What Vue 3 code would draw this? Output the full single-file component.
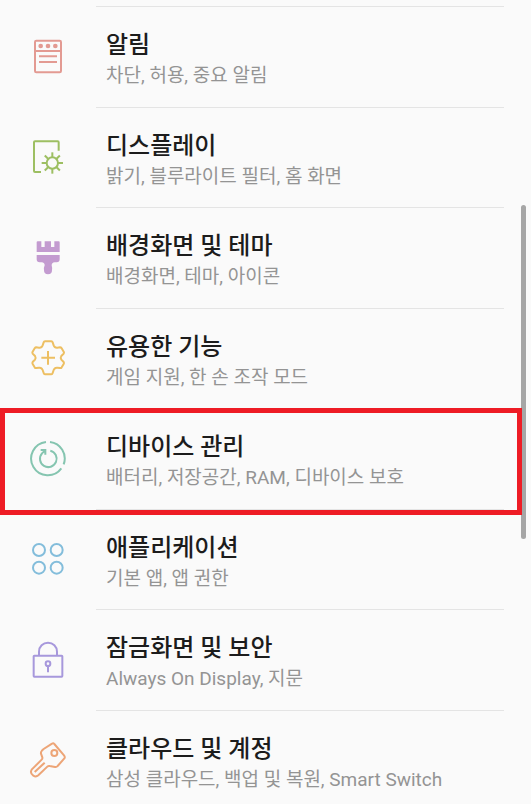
<script setup>
const items = [
  { id: 'notifications', title: '알림', detail: '차단, 허용, 중요 알림', color: '#e39a92', box: '24 21 120 120' },
  { id: 'display', title: '디스플레이', detail: '밝기, 블루라이트 필터, 홈 화면', color: '#9dbf62', box: '24 24 120 120' },
  { id: 'themes', title: '배경화면 및 테마', detail: '배경화면, 테마, 아이콘', color: '#c39bd0', box: '24 24 120 120' },
  { id: 'features', title: '유용한 기능', detail: '게임 지원, 한 손 조작 모드', color: '#edbf62', box: '24 21 120 120' },
  { id: 'device', title: '디바이스 관리', detail: '배터리, 저장공간, RAM, 디바이스 보호', color: '#85c5b0', box: '24 15 120 120', marked: true },
  { id: 'apps', title: '애플리케이션', detail: '기본 앱, 앱 권한', color: '#83bddb', box: '24 18 120 120' },
  { id: 'security', title: '잠금화면 및 보안', detail: 'Always On Display, 지문', color: '#a798dc', box: '24 15 120 120' },
  { id: 'accounts', title: '클라우드 및 계정', detail: '삼성 클라우드, 백업 및 복원, Smart Switch', color: '#eda577', box: '24 18 120 120' },
]
const rays = [0, 45, 90, 135, 180, 225, 270, 315]
</script>

<template>
  <main class="settings">
    <nav class="list">
      <a
        v-for="item in items"
        :key="item.id"
        class="row"
        :class="{ marked: item.marked }"
        :href="'#' + item.id"
      >
        <span class="icon-cell">
          <svg class="icon" :class="item.id" :viewBox="item.box" :style="{ color: item.color }" aria-hidden="true">
            <g v-if="item.id === 'notifications'">
              <rect x="45" y="32" width="78" height="95" rx="4" />
              <path d="M45 63H123M57 79H111M57 96H111" />
              <g class="solid">
                <circle cx="62" cy="48" r="7" />
                <circle cx="84" cy="48" r="7" />
                <circle cx="106" cy="48" r="7" />
              </g>
            </g>
            <g v-else-if="item.id === 'display'">
              <path d="M116 62V37Q116 34 113 34H45Q42 34 42 37V123Q42 126 45 126H63" />
              <circle cx="97" cy="99" r="17" />
              <path v-for="angle in rays" :key="angle" d="M97 82V67" :transform="`rotate(${angle} 97 99)`" />
            </g>
            <g v-else-if="item.id === 'themes'" class="solid">
              <path d="M53 34H64V51H74V34H93V51H103V34H116Q119 34 119 37V66H50V37Q50 34 53 34Z" />
              <path d="M50 75H119V88Q119 97 110 97H104Q95 98 95 106Q97 112 96 121A12 12 0 0 1 72 121Q71 112 74 106Q74 98 65 97H59Q50 97 50 88Z" />
            </g>
            <g v-else-if="item.id === 'features'">
              <path d="M75 28H94Q97 28 98 31L101 40Q104 48 112 47L120 46Q123 46 125 49L131 59Q133 62 131 65L124 72Q120 78 124 83L131 90Q133 93 131 96L125 106Q123 109 120 108L112 107Q104 106 101 114L98 123Q97 127 94 127H75Q72 127 71 123L68 114Q65 106 57 107L49 108Q46 109 44 106L38 96Q36 93 38 90L45 83Q49 78 45 72L38 65Q36 62 38 59L44 49Q46 46 49 46L57 47Q65 48 68 40L71 31Q72 28 75 28Z" />
              <path d="M84 57V98M64 77H105" />
            </g>
            <g v-else-if="item.id === 'device'">
              <path d="M90 24A50 50 0 0 1 131 91M124 103A50 50 0 1 1 78 24" />
              <path d="M91 50A25 25 0 1 1 66 58L76 49M62 48H76V62" />
            </g>
            <g v-else-if="item.id === 'apps'">
              <circle cx="57" cy="48" r="18" />
              <circle cx="110" cy="48" r="18" />
              <circle cx="57" cy="101" r="18" />
              <circle cx="110" cy="101" r="18" />
            </g>
            <g v-else-if="item.id === 'security'">
              <rect x="41" y="62" width="86" height="63" rx="2" />
              <path d="M57 62V50A27 27 0 0 1 111 50V62M84 93V112" />
              <circle cx="84" cy="86" r="7" />
            </g>
            <g v-else>
              <path d="M96 26Q100 23 103 27L132 61Q136 66 133 70L113 93Q110 97 105 96L89 93Q85 92 82 95L55 121Q48 127 40 122Q29 114 35 104L65 74Q68 71 67 67L63 56Q62 52 65 48Q67 45 71 42Z" />
              <circle cx="103" cy="54" r="9" />
              <path d="M44 111L74 83" />
            </g>
          </svg>
        </span>
        <span class="copy">
          <span class="title">{{ item.title }}</span>
          <span class="detail">{{ item.detail }}</span>
        </span>
      </a>
    </nav>
    <div class="scroll-thumb"></div>
  </main>
</template>

<style>
body {
  margin: 0;
  background: #fafafa;
}
</style>

<style scoped>
.settings {
  position: relative;
  padding-top: 6px;
  background: #fafafa;
  font-family: Roboto, "Noto Sans CJK KR", sans-serif;
}
.list {
  display: flex;
  flex-direction: column;
}
.row {
  position: relative;
  display: flex;
  align-items: flex-start;
  padding-right: 27px;
  color: inherit;
  text-decoration: none;
}
.icon-cell {
  display: flex;
  flex: 0 0 96px;
  justify-content: center;
  padding-top: 31px;
}
.icon {
  width: 40px;
  height: 40px;
  fill: none;
  stroke: currentColor;
  stroke-width: 6;
}
.icon .solid {
  fill: currentColor;
  stroke: none;
}
.copy {
  display: flex;
  flex: 1;
  flex-direction: column;
  gap: 3px;
  min-width: 0;
  padding: 22px 0 19px 10px;
  border-top: 1px solid #e4e4e4;
}
.row:nth-child(even) .copy {
  padding-bottom: 18px;
}
.row:last-child .copy {
  padding-bottom: 8px;
}
.title {
  color: #1c1c1c;
  font-size: 24px;
  font-weight: 500;
  line-height: 32px;
}
.detail {
  color: #949494;
  font-size: 19px;
  line-height: 24px;
}
/* Frame drawn around the entry being pointed out */
.marked::after {
  content: "";
  position: absolute;
  z-index: 2;
  top: 0;
  right: 9px;
  bottom: -6px;
  left: 0;
  border: 5px solid #ee1c25;
}
.scroll-thumb {
  position: absolute;
  z-index: 1;
  top: 205px;
  right: 5px;
  width: 5px;
  height: 334px;
  border-radius: 3px;
  background: #a6a6a6;
}
</style>
